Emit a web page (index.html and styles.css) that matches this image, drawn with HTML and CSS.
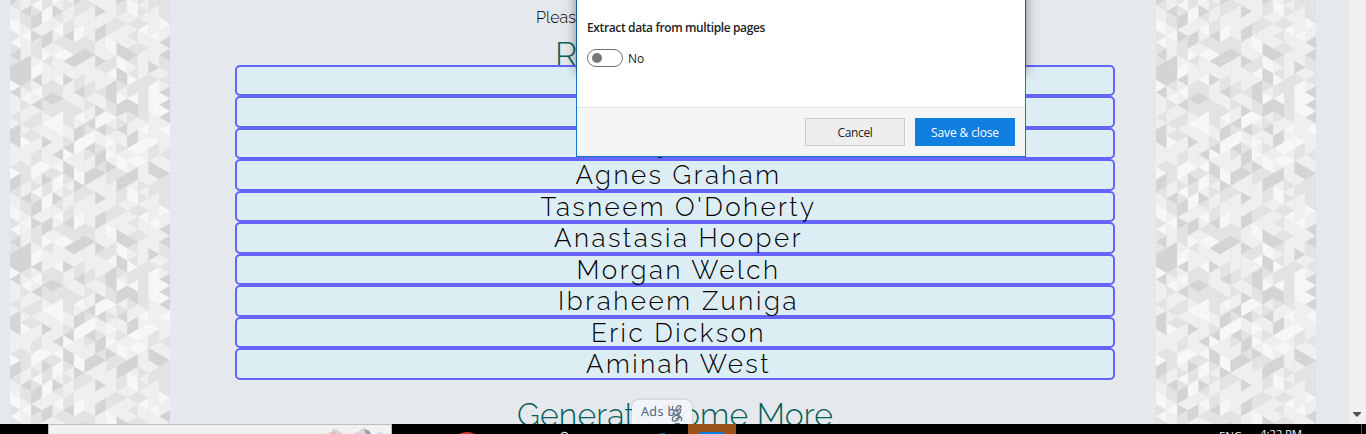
FILE: index.html
```
<!DOCTYPE html>
<html lang="en">
<head>
<meta charset="utf-8">
<title>Random names</title>
<link rel="stylesheet" href="styles.css">
</head>
<body>
<div class="screen">
  <div class="viewport">
    <div class="mosaic"></div>
    <main class="content">
      <p class="intro"><span data-width="40">Pleas</span></p>
      <h1 class="title"><span>R</span></h1>
      <ul class="names">
        <li class="name"></li>
        <li class="name"></li>
        <li class="name"></li>
        <li class="name"><span data-width="206">Agnes Graham</span></li>
        <li class="name"><span data-width="276">Tasneem O'Doherty</span></li>
        <li class="name"><span data-width="249">Anastasia Hooper</span></li>
        <li class="name"><span data-width="204">Morgan Welch</span></li>
        <li class="name"><span data-width="241">Ibraheem Zuniga</span></li>
        <li class="name"><span data-width="175">Eric Dickson</span></li>
        <li class="name"><span data-width="185">Aminah West</span></li>
      </ul>
      <h2 class="more"><span data-width="316">Generate Some More</span></h2>
    </main>
    <div class="mosaic"></div>
    <div class="scrollbar"><svg width="8" height="5" viewBox="0 0 8 5"><path d="M0 0h8v1L4 5 0 1z" fill="#505050"/></svg></div>
  </div>

  <footer class="taskbar">
    <div class="search">
      <svg width="56" height="8" viewBox="0 0 56 8"><path d="M0 8V5l4-1 3-4 4 2 3 2 4 4z" fill="#e5d2d5"/><path d="M3 8l3-5 4 3v2z" fill="#d8b5ba"/><path d="M26 5l5-1 5-4 6 2 4 6H30z" fill="#ded5d7"/><path d="M37 1l5 2 3 5h-5z" fill="#9999b5"/><path d="M50 4h4l2 2-5 1z" fill="#e0e0e3"/></svg>
    </div>
    <div class="apps">
      <svg width="400" height="10" viewBox="0 0 400 10"><path d="M67 10q8-4 16 0z" fill="#e03a2a"/><circle cx="172.500" cy="12" r="3.600" fill="none" stroke="#e8e8e8" stroke-width="1.300"/><path d="M264 10l9-1v1z" fill="#0b70b8"/><path d="M296 0h48v10h-48z" fill="#9b531b"/><path d="M308 8h24v2h-24z" fill="#087be4"/></svg>
    </div>
    <div class="tray"><span data-width="23">ENG</span><span class="clock" data-width="42">4:22 PM</span></div>
    <i class="peek"></i>
  </footer>

  <div class="ads"><span data-width="41">Ads by</span><svg class="scribble" width="12" height="20" viewBox="0 0 12 20" fill="none" stroke="#65778a" stroke-width="1.300"><path d="M2 1Q0 5 4 5.500T10 1.500Q8-.5 6 2T8 6M1 8l9 4M10 7l-8 5M2 12Q0 17 4 16T8 12Q12 12 10 16M3 20Q6 17 10 20"/></svg></div>

  <i class="descender"></i>
  <section class="dialog">
    <div class="dialog-body">
      <h3 class="label"><span data-width="178">Extract data from multiple pages</span></h3>
      <div class="setting"><i class="switch"></i><span data-width="16">No</span></div>
    </div>
    <div class="actions">
      <button class="button"><span data-width="35">Cancel</span></button>
      <button class="button primary"><span data-width="68">Save &amp; close</span></button>
    </div>
  </section>
</div>
<script src="app.js"></script>
</body>
</html>
```
FILE: styles.css
```
* { box-sizing: border-box; }
body { margin: 0; overflow: hidden; }
.screen {
  position: relative;
  width: 1366px;
  height: 434px;
  display: flex;
  flex-direction: column;
  overflow: hidden;
  background: #e5e9ee;
}
.viewport { display: flex; height: 424px; padding-left: 10px; overflow: hidden; }
.mosaic { width: 160px; flex: none; }
.mosaic svg { display: block; }
.content {
  width: 986px;
  flex: none;
  padding: 7px 41px 0 65px;
  font-family: Raleway, Lato, sans-serif;
  font-weight: 350;
  color: #000;
}
.content span { display: inline-block; white-space: pre; }
.intro { margin: 0; height: 27px; padding-left: 301px; font-size: 16px; line-height: 21px; }
.title { margin: 0; height: 30.750px; padding-left: 320px; font-size: 34px; font-weight: 350; line-height: 40px; color: #075f5c; }
.names { position: relative; list-style: none; margin: 0; padding: 0; width: 880px; }
.name {
  height: 31.500px;
  border: 2px solid #6464fa;
  border-radius: 5px;
  background: #dcedf4;
  padding-left: 7px;
  text-align: center;
  font-size: 26px;
  line-height: 28px;
}
.more { margin: 15px 0 0 282px; font-size: 32px; font-weight: 350; line-height: 40px; color: #075f5c; }
.scrollbar { width: 17px; flex: none; margin-left: 33px; background: #f0f0f0; display: flex; align-items: flex-end; padding: 0 0 7px 4px; }
.taskbar { display: flex; height: 10px; background: #000; padding-left: 48px; overflow: hidden; }
.search { width: 344px; flex: none; border: solid #bdbdbd; border-width: 1px 1px 0; background: #f1f1f1; padding: 3px 0 0 278px; }
.search svg, .apps svg { display: block; }
.apps { width: 827px; flex: none; }
.tray { width: 142px; display: flex; gap: 18px; font: 11.500px/16px "Open Sans", sans-serif; color: #f5f5f5; padding-top: 4px; }
.tray span { white-space: pre; }
.clock { margin-top: -2px; }
.peek { width: 1px; background: #555; }
.ads {
  position: absolute;
  left: 632px;
  top: 400px;
  width: 60px;
  height: 24px;
  padding-left: 9px;
  border-radius: 7px 7px 0 0;
  background: rgba(242, 245, 250, .96);
  box-shadow: 0 0 3px rgba(0, 0, 0, .22);
  clip-path: inset(-4px -4px 0 -4px);
  font: 12.500px/24px "Noto Sans", sans-serif;
  color: #50657e;
}
.scribble { position: absolute; left: 39px; top: 5px; }
.descender { position: absolute; left: 658px; top: 157px; width: 4px; height: 1px; background: #16162f; }
.dialog {
  position: absolute;
  isolation: isolate;
  left: 576px;
  top: 0;
  width: 450px;
  height: 157px;
  border: solid #1677ca;
  border-width: 0 1px 1px;
  background: #fff;
  font-family: "Segoe UI", "Open Sans", sans-serif;
  font-size: 12px;
  color: #222;
}
.dialog::before { content: ""; position: absolute; z-index: -1; left: 0; right: 0; top: -20px; height: 92px; box-shadow: 0 0 12px rgba(0, 0, 0, .5); }
.dialog-body { height: 107px; padding: 19px 10px 17px; background: #fff; }
.label { margin: 0 0 12px; font-size: 12px; font-weight: 600; line-height: 18px; white-space: pre; }
.setting { display: flex; align-items: center; gap: 5px; height: 18px; }
.switch { width: 36px; height: 18px; border: 1px solid #727278; border-radius: 9px; padding: 3px 4px; }
.switch::before { content: ""; display: block; width: 10px; height: 10px; border-radius: 50%; background: #77777c; }
.actions { height: 49px; display: flex; justify-content: flex-end; gap: 10px; padding: 10px 10px 0; background: #f4f6f6; border-top: 1px solid #e0e3e3; }
.button { width: 100px; height: 28px; padding: 1px 0 0; border: 1px solid #c9cccf; background: #eeeef0; color: #222; font: inherit; white-space: pre; }
.primary { border-color: #117fe0; background: #117fe0; color: #fff; }
```
FILE: app.js
```
// One string per column; each digit is the shade of one triangle, top to bottom.
const columns = [
  '211002023233303111213331112033',
  '132210111333321021121201112221',
  '023313222100310131221211220012',
  '200113310211122322101131110232',
  '132101210111022322000111310200',
  '211223220311311122221123013321',
  '221100223311223112013300111003',
  '211111223111122121132003211331',
  '131133111321112113003112332311',
  '111221001220133322012101013221',
  '221211133003321033123112100233',
  '001212123212022033211330101331',
  '121201121111222222210100101112',
  '211110111131200000111102213312',
  '222011313221213030310111211322'
];
const shades = ['#f7f7f7', '#efefef', '#e3e3e3', '#d4d4d4'];
const w = 32 / 3, h = 187 / 30;
let shapes = '';
columns.forEach((col, c) => {
  for (let n = -1; n < 72; n++) {
    const y = 5.2 + n * h;
    const shade = shades[col[(n + 30) % 30]];
    const left = (n + c) % 2 === 0;
    const apex = left ? c * w : (c + 1) * w;
    const base = left ? (c + 1) * w : c * w;
    shapes += `<path d="M${apex} ${y}L${base} ${y - h}V${y + h}z" fill="${shade}" stroke="${shade}" stroke-width=".25"/>`;
  }
});
document.querySelectorAll('.mosaic').forEach(el => {
  el.innerHTML = `<svg width="160" height="424" viewBox="0 0 160 424">${shapes}</svg>`;
});

// Track each label out to its set width.
document.querySelectorAll('[data-width]').forEach(el => {
  el.style.letterSpacing = '0px';
  el.style.display = 'inline-block';
  el.style.flex = 'none';
  const range = document.createRange();
  range.selectNodeContents(el);
  const natural = range.getBoundingClientRect().width;
  el.style.letterSpacing = (el.dataset.width - natural) / el.textContent.length + 'px';
});
```
